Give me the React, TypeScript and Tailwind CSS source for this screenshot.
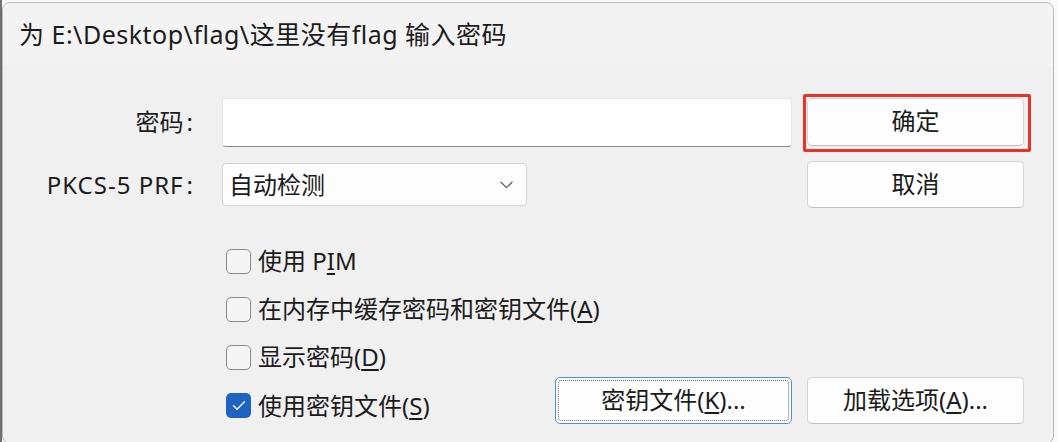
import React from 'react';

const font = { fontFamily: '"Noto Sans", "Noto Sans CJK SC", sans-serif' };

const U: React.FC<{ children: React.ReactNode }> = ({ children }) => (
  <span className="underline underline-offset-[3px] decoration-[1.5px]">{children}</span>
);

const Button: React.FC<{ children: React.ReactNode; className?: string; focused?: boolean }> = ({
  children,
  className = '',
  focused,
}) => (
  <div
    className={`relative flex items-center justify-center rounded-[5px] bg-[#fdfdfd] text-[24px] leading-none text-[#1b1b1b] ${
      focused ? 'border border-[#4f92d8]' : 'border border-[#d3d3d3] border-b-[#c2c2c2]'
    } ${className}`}
  >
    {focused && <div className="absolute inset-[2px] rounded-[3px] border border-dotted border-[#6b6b6b]" />}
    <span className="-mt-[2px]">{children}</span>
  </div>
);

const Check: React.FC<{ checked?: boolean; children: React.ReactNode }> = ({ checked, children }) => (
  <div className="flex items-center gap-[7px]">
    {checked ? (
      <div className="flex h-[25px] w-[25px] items-center justify-center rounded-[5px] bg-[#1f63c2]">
        <svg width="14" height="11" viewBox="0 0 14 11" fill="none">
          <path d="M1.5 5.8 L5 9.2 L12.5 1.8" stroke="white" strokeWidth="1.4" strokeLinecap="round" strokeLinejoin="round" />
        </svg>
      </div>
    ) : (
      <div className="h-[25px] w-[25px] rounded-[5px] border border-[#8b8b8b] bg-[#f5f5f5]" />
    )}
    <span className="text-[24px] leading-none text-[#1b1b1b]">{children}</span>
  </div>
);

const Label: React.FC<{ children: React.ReactNode; className?: string }> = ({ children, className = '' }) => (
  <div className="flex w-[192px] justify-end text-[24px] leading-none text-[#1b1b1b]">
    <span className={className}>{children}</span>
    <span className="ml-[3px] mr-[2px]">:</span>
  </div>
);

export default function App() {
  return (
    <div className="flex h-[442px] w-[1058px] overflow-hidden bg-[#f9f9f9]" style={font}>
      <div className="w-[2px] bg-[#6f6f6f]" />
      <div className="mt-[2px] flex h-[442px] w-[1052px] flex-col overflow-hidden rounded-[8px] border border-[#b9b9b9] bg-[#f0f0f0]">
        {/* title */}
        <div className="flex h-[63px] items-center bg-[#f3f3f3] pl-[16px] text-[25px] leading-none tracking-[0.5px] text-[#1b1b1b]">
          为 E:\Desktop\flag\这里没有flag 输入密码
        </div>

        {/* password row */}
        <div className="mt-[32px] flex h-[48px] items-center">
          <Label>密码</Label>
          <div className="w-[612px] pl-[27px]">
            <div className="h-[49px] w-[570px] rounded-[4px] border border-[#e6e6e6] border-b-[#8a8a8a] bg-white" />
          </div>
          <div className="relative">
            <Button className="h-[48px] w-[217px]">确定</Button>
            <div className="pointer-events-none absolute -bottom-[6px] -left-[4px] -right-[7px] -top-[4px] rounded-[2px] border-[3px] border-[#e8322b]" />
          </div>
        </div>

        {/* PRF row */}
        <div className="mt-[15px] flex h-[47px] items-center">
          <Label className="tracking-[1px]">PKCS-5 PRF</Label>
          <div className="w-[612px] pl-[27px]">
            <div className="flex h-[43px] w-[305px] items-center justify-between rounded-[4px] border border-[#d6d6d6] bg-[#fdfdfd] pl-[6px] pr-[13px]">
              <span className="text-[24px] leading-none text-[#1b1b1b]">自动检测</span>
              <svg width="13" height="8" viewBox="0 0 13 8" fill="none">
                <path d="M1 1.2 L6.5 6.6 L12 1.2" stroke="#606060" strokeWidth="1.3" strokeLinecap="round" strokeLinejoin="round" />
              </svg>
            </div>
          </div>
          <Button className="h-[47px] w-[217px]">取消</Button>
        </div>

        {/* options */}
        <div className="mt-[29px] flex flex-col pl-[223px]">
          <div className="flex h-[48px] items-center">
            <Check>
              使用 P<U>I</U>M
            </Check>
          </div>
          <div className="flex h-[48px] items-center">
            <Check>
              在内存中缓存密码和密钥文件(<U>A</U>)
            </Check>
          </div>
          <div className="flex h-[48px] items-center">
            <Check>
              显示密码(<U>D</U>)
            </Check>
          </div>
          <div className="-mt-[4px] flex h-[47px] items-start">
            <div className="flex h-[47px] w-[329px] items-center pt-[10px]">
              <Check checked>
                使用密钥文件(<U>S</U>)
              </Check>
            </div>
            <Button focused className="h-[47px] w-[237px]">
              密钥文件(<U>K</U>)...
            </Button>
            <Button className="ml-[15px] h-[47px] w-[217px]">
              加载选项(<U>A</U>)...
            </Button>
          </div>
        </div>
      </div>
    </div>
  );
}
